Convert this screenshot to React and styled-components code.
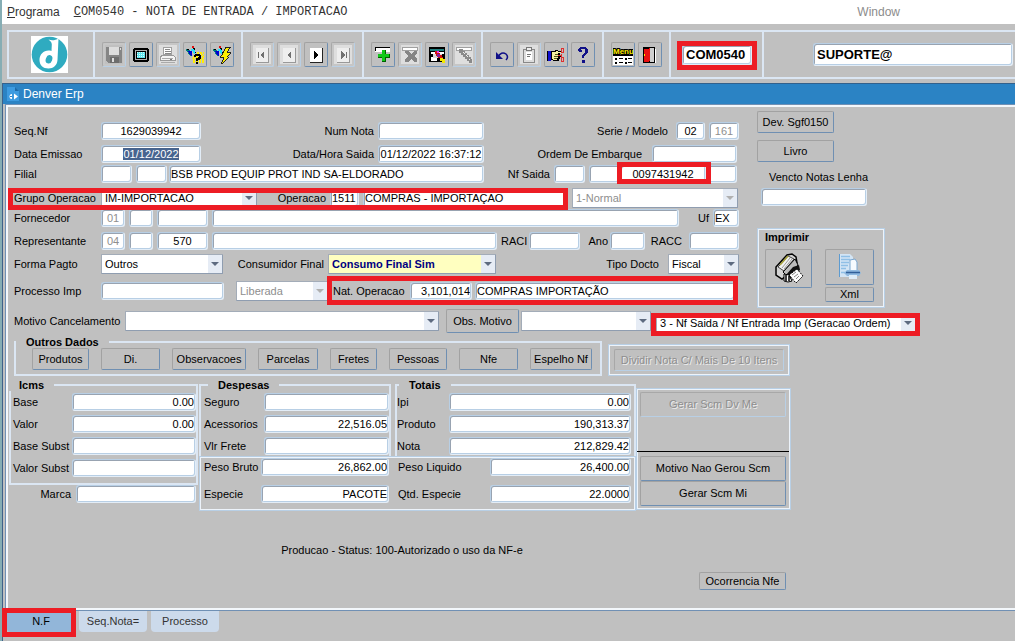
import React, { useEffect, useId, useRef } from "react";
import styled, { createGlobalStyle, css } from "styled-components";

const GlobalStyle = createGlobalStyle`
  *, *::before, *::after { box-sizing: border-box; }
  html, body { margin: 0; padding: 0; }
  body, button, input, select {
    font-family: "Liberation Sans", Arial, sans-serif;
    font-size: 11px;
    line-height: 13px;
    color: #000;
  }
  body { background: #c0c0c0; }
  ::selection { background: #47648f; color: #fff; }
`;

/* ---------- window chrome ---------- */

const Shell = styled.div`
  display: flex;
  flex-direction: column;
  min-height: 100vh;
  border-left: 2px solid #86adb4;
  background: #c0c0c0;
  overflow: hidden;
`;

const MenuBar = styled.header`
  display: flex;
  align-items: center;
  height: 24px;
  padding-left: 5px;
  background: #fff;
  font-size: 12px;
  color: #333;
`;

const MenuItem = styled.a`
  color: ${(p) => (p.$dim ? "#8c8c8c" : "#333")};
  text-decoration: none;
  margin-left: ${(p) => (p.$dim ? "auto" : "0")};
  margin-right: ${(p) => (p.$dim ? "115px" : "14px")};
  white-space: nowrap;
`;

const MenuTitle = styled.a`
  font-family: "Liberation Mono", "Courier New", monospace;
  color: #333;
  text-decoration: none;
  white-space: pre;
`;

const ToolBar = styled.div`
  display: flex;
  height: 49px;
  margin: 6px 0 4px 5px;
  border: 2px solid #dbe6f3;
  border-right: 0;
`;

const ToolGroup = styled.div`
  display: flex;
  flex: ${(p) => (p.$grow ? "1 1 auto" : "none")};
  align-items: center;
  gap: 3px;
  padding: 0 ${(p) => p.$end || 7}px 0 ${(p) => p.$start || 7}px;
  border-right: ${(p) => (p.$grow ? "0" : "2px solid #dbe6f3")};
`;

const ToolButton = styled.button`
  display: grid;
  place-items: center;
  width: 24px;
  height: 25px;
  padding: 0;
  border: 1px solid;
  border-color: #a2a2a2 #6f8fb2 #6f8fb2 #a2a2a2;
  border-radius: 2px;
  background: #c0c0c0;
  ${(p) =>
    p.$off &&
    css`
      border-color: #a8a8a8 #b8cfe5 #b8cfe5 #a8a8a8;
      background: ${p.$flat ? "#c0c0c0" : "#dedede"};
      box-shadow: inset 0 0 0 2px #c6c6c6;
    `}
`;

const Window = styled.main`
  display: flex;
  flex-direction: column;
  flex: 1;
  border-left: 1px solid #3f6189;
`;

const TitleBar = styled.h1`
  display: flex;
  align-items: center;
  gap: 4px;
  height: 21px;
  margin: 0;
  padding-left: 4px;
  border-top: 1px solid #33618c;
  background: #2b83c4;
  color: #fff;
  font-size: 12px;
  font-weight: 400;
`;

const Panel = styled.form`
  flex: 1;
  margin-left: 2px;
  padding-top: 4px;
  border: 1px solid #7090b4;
  border-right: 0;
  box-shadow: inset 2px 2px #f3f7fb, inset 0 -2px #f3f7fb;
`;

/* ---------- form parts ---------- */

const Top = styled.div`
  display: flex;
  align-items: flex-start;
  gap: 18px;
  padding: 2px 0 0 8px;
`;

const Rows = styled.div`
  display: flex;
  flex-direction: column;
  gap: ${(p) => p.$gap || 0}px;
  padding-top: ${(p) => p.$top || 0}px;
`;

const Row = styled.div`
  display: flex;
  align-items: center;
  height: ${(p) => p.$h || 18}px;
  margin-top: ${(p) => p.$mt || 0}px;
  padding-left: ${(p) => p.$pl || 0}px;
`;

const Label = styled.label`
  flex: none;
  width: ${(p) => (p.$w ? `${p.$w}px` : "auto")};
  padding-right: ${(p) => p.$pr || 0}px;
  padding-left: ${(p) => p.$pl || 0}px;
  text-align: ${(p) => (p.$pr ? "right" : "left")};
  white-space: nowrap;
`;

const TextBox = styled.input`
  flex: none;
  width: ${(p) => p.$w}px;
  height: 18px;
  margin-left: ${(p) => p.$ml || 0}px;
  padding: 0 1px;
  border: 1px solid;
  border-color: #b8cfe5 #e3edf7 #e3edf7 #b8cfe5;
  border-radius: 3px;
  outline: 0;
  background: #fff;
  box-shadow: inset 1px 1px #98a3b1, inset -1px -1px #b8cfe5;
  text-align: ${(p) => p.$align || "left"};
  &:disabled { color: #8e8e8e; }
`;

const ProgramBox = styled(TextBox)`
  height: ${(p) => p.$h}px;
  font-size: 13px;
  font-weight: 700;
  padding-left: 3px;
`;

const UserBox = styled(ProgramBox)`
  flex: 1 1 auto;
  width: auto;
  min-width: 60px;
`;

const Combo = styled.span`
  position: relative;
  flex: none;
  width: ${(p) => p.$w}px;
  height: 20px;
  margin-left: ${(p) => p.$ml || 0}px;
  &::after {
    content: "";
    position: absolute;
    top: 8px;
    right: 4px;
    border: 4px solid transparent;
    border-top-color: ${(p) => (p.$off ? "#b0b0b0" : "#5e6b80")};
    border-bottom: 0;
    pointer-events: none;
  }
  select {
    display: block;
    appearance: none;
    width: 100%;
    height: 100%;
    padding: 0 16px 0 3px;
    border: 1px solid;
    border-color: #a3acb8 #8f9db0 #8f9db0 #a3acb8;
    border-radius: 1px;
    outline: 0;
    background: linear-gradient(to left, #e6ecf5 14px, ${(p) => (p.$tint ? "#ffffc0" : "#fff")} 14px);
    color: ${(p) => (p.$off ? "#8e8e8e" : p.$tint ? "#000080" : "#000")};
    font-weight: ${(p) => (p.$tint ? 700 : 400)};
    opacity: 1;
  }
`;

const Button = styled.button`
  display: grid;
  place-items: center;
  flex: none;
  width: ${(p) => p.$w}px;
  height: ${(p) => p.$h || 22}px;
  margin-left: ${(p) => p.$ml || 0}px;
  padding: 0;
  border: 1px solid;
  border-color: #a2a2a2 #6f8fb2 #6f8fb2 #a2a2a2;
  border-radius: 2px;
  background: #c0c0c0;
  white-space: nowrap;
  &:disabled {
    border-color: #a8a8a8 #b8cfe5 #b8cfe5 #a8a8a8;
    color: #8e8e8e;
    text-shadow: 1px 1px #ececec;
  }
`;

const Marked = styled.div`
  position: relative;
  display: flex;
  flex: none;
  align-items: center;
  align-self: ${(p) => p.$self || "auto"};
  margin-left: ${(p) => p.$ml || 0}px;
  &::after {
    content: "";
    position: absolute;
    z-index: 2;
    inset: ${(p) => p.$inset};
    border: 5px solid #ed1c24;
    pointer-events: none;
  }
`;

const Group = styled.fieldset`
  min-width: 0;
  margin: 0;
  padding: ${(p) => p.$pad || "0"};
  border: 2px solid #dbe6f3;
  border-bottom-width: ${(p) => (p.$open ? 0 : 2)}px;
  > legend {
    height: 12px;
    margin-left: ${(p) => p.$lead || 0}px;
    padding: 0 10px;
    line-height: 12px;
    font-weight: 700;
  }
`;

const Frame = styled.div`
  border: 1px solid #b8cfe5;
  box-shadow: inset 0 0 0 1px #edf3fa;
  padding: ${(p) => p.$pad};
`;

const ButtonRow = styled.div`
  display: flex;
  gap: 12px;
`;

const Groups = styled.div`
  display: flex;
  align-items: flex-end;
  gap: 6px;
  margin-top: 3px;
  padding-left: 8px;
`;

const Lower = styled.div`
  width: fit-content;
  margin-top: 3px;
  padding-left: 3px;
`;

const Totals = styled.div`
  display: flex;
  align-items: flex-start;
`;

const MiddleTop = styled.div`
  display: flex;
  gap: 4px;
`;

const Middle = styled.div`
  margin-left: 1px;
`;

const ScmFrame = styled(Frame)`
  margin-top: 9px;
`;

const Rule = styled.hr`
  height: 1px;
  margin: 34px -3px 4px -3px;
  border: 0;
  background: #000;
`;

const Status = styled.output`
  display: block;
  margin-top: 33px;
  padding-left: 4px;
  text-align: center;
`;

const Actions = styled.div`
  display: flex;
  justify-content: flex-end;
  margin-top: 15px;
  padding: 0 5px 19px 0;
`;

const Side = styled.aside`
  display: flex;
  flex-direction: column;
  align-items: flex-start;
`;

const SideButtons = styled.div`
  display: flex;
  flex-direction: column;
  gap: 7px;
`;

const SideField = styled.div`
  display: flex;
  flex-direction: column;
  gap: 4px;
  margin: 9px 0 22px 4px;
`;

const PrintFrame = styled(Frame)`
  width: 128px;
  height: 80px;
  h2 {
    margin: 0 0 5px;
    font-size: 11px;
    line-height: 13px;
  }
`;

const PrintButtons = styled.div`
  display: flex;
  gap: 13px;
`;

const Stack = styled.div`
  display: flex;
  flex-direction: column;
  gap: 2px;
`;

const Tabs = styled.nav`
  display: flex;
  gap: 4px;
  height: 30px;
  padding-left: 4px;
`;

const Tab = styled.button`
  width: 68px;
  height: 21px;
  padding: 0;
  border: 0;
  border-radius: 0 0 4px 4px;
  background: ${(p) => (p.$on ? "#92b6d9" : "#ccdaeb")};
  color: ${(p) => (p.$on ? "#000" : "#333")};
`;

/* ---------- drawings ---------- */

const Px = ({ s = 18, children }) => (
  <svg width={s} height={s} viewBox={`0 0 ${s} ${s}`} shapeRendering="crispEdges" aria-hidden="true">
    {children}
  </svg>
);

const Logo = () => (
  <svg width="37" height="37" viewBox="0 0 37 37" aria-hidden="true">
    <path d="M0 0h37v37H0z" fill="#fff" />
    <circle cx="18.500" cy="18.500" r="17.800" fill="#2fabc0" />
    <path d="M17.500 3.500C21 5 24.500 4.200 27.500 2.500L26.500 24C26 29.500 22.500 32.500 17.500 32.500C12 32.500 8.500 29 8.500 24C8.500 18.500 12.500 14.500 17.500 14.500C18.500 14.500 19.500 14.600 20.500 15L20.800 8.500C20.800 6.500 19.500 5 17.500 3.500Z" fill="#fff" />
    <ellipse cx="18" cy="23.300" rx="3.200" ry="4.300" fill="#2fabc0" transform="rotate(20 18 23.300)" />
  </svg>
);

const FileIcon = () => (
  <svg width="12" height="14" viewBox="0 0 12 14" aria-hidden="true">
    <path d="M0 0h8l4 4v10H0z" fill="#3d9be0" />
    <path d="M8 0v4h4z" fill="#1f6ba8" />
    <path d="M5 7a2.500 2.500 0 1 0 0 5z" fill="#fff" />
    <path d="M3 9h2v1H3z" fill="#2b83c4" />
    <path d="M7 6.500v6L11 9.500z" fill="#fff" />
  </svg>
);

const SaveIcon = () => (
  <Px>
    <path d="M1 1h15l1 1v15H3l-2-2z" fill="#858585" />
    <path d="M4 1h10v8H4z" fill="#ddd" />
    <path d="M5 11h9v6H5z" fill="#6d6d6d" />
    <path d="M7 12h2v4H7z" fill="#ddd" />
    <path d="M15 2h1v2h-1z" fill="#ddd" />
  </Px>
);

const ScreenIcon = () => (
  <Px>
    <path d="M2 2h14v1h1v12h-1v1H2v-1H1V3h1z" />
    <path d="M3 4h12v10H3z" fill="#b0b0b0" />
    <path d="M4 5h10v8H4z" />
    <path d="M5 6h8v6H5z" fill="#5fe5ef" />
    <path d="M5 6.500h8M5 8.500h8M5 10.500h8" stroke="#d8ffff" strokeDasharray="1 1" />
  </Px>
);

const PrinterOffIcon = () => (
  <Px>
    <path d="M4.500 1.500h8v7h-8z" fill="#fff" stroke="#a0a0a0" />
    <path d="M6 3.500h5M6 5.500h6M6 7.500h6" stroke="#888" />
    <path d="M2.500 9.500h12l2 2v3h-15v-3z" fill="#f4f4f4" stroke="#999" />
    <path d="M3 12.500h11M2 16.500h14" stroke="#aaa" />
    <path d="M11 13h2v1h-2z" fill="#777" />
  </Px>
);

const Torch = () => (
  <>
    <path d="M0 3h2v1h2v1h2v4H5v1H4V9H3V8H2V6H1V5H0z" fill="#008080" />
    <path d="M2 5h4v5H5V9H4V8H3V6H2z" fill="#0000d0" />
    <path d="M5 3h3v1h1v4H8V7H7V5H5z" fill="#20e0ff" />
    <path d="M6 0h2v2H6z" fill="#e01010" />
    <path d="M8 2h1v2H8zM1 3h2v1H1zM9 6h1v1H9zM7 2h1v1H7z" />
  </>
);

const QueryIcon = () => (
  <Px>
    <path
      d="M11 6.500h7M9 8.500h9M7 10.500h11M6 12.500h12M7 14.500h11M7 16.500h11M11 7.500h7M8 9.500h10M7 11.500h11M7 13.500h11M7 15.500h11"
      stroke="#ffee00"
      strokeDasharray="2 1"
    />
    <Torch />
    <path d="M9 8h5v1h1v4h-1v1h-2v1h-2v-3h2v-1h1V10h-3v1H8V9h1zM10 16h2v2h-2z" />
  </Px>
);

const FlashIcon = () => (
  <Px>
    <Torch />
    <path d="M12 1h6v1h-1v1h-1v2h-1v1h3v2h-1v1h-1v1h-1v1h1v1h-1v1h-1v1h-1v1h-1v1h-1v1h-1v1H8v-2h1v-2h1v-2H7v-2h1V9h1V7h1V5h1V3h1z" fill="#222" />
    <path d="M13 2h3v1h-1v2h-1v2h3v1h-1v1h-1v1h-1v1h1v1h-1v1h-1v1h-1v1h-1v1h-1v1H9v-1h1v-2h1v-3H8v-1h1V9h1V7h1V5h1V3h1z" fill="#ffee00" />
  </Px>
);

const NavIcon = ({ kind, off }) => {
  const c = off ? "#707070" : "#000";
  const left = kind === "first" || kind === "prev";
  return (
    <Px>
      <path d="M3 2h12v14H3z" fill={off ? "#eee" : "#fff"} />
      <path d="M15.500 2v14.500H3" fill="none" stroke={off ? "#999" : "#222"} />
      <path d={left ? "M11 5v8L7 9z" : "M7 5v8l4-4z"} fill={c} />
      {kind === "first" && <path d="M5 6h1v6H5z" fill={c} />}
      {kind === "last" && <path d="M12 6h1v6h-1z" fill={c} />}
    </Px>
  );
};

const AddIcon = () => (
  <Px>
    <path d="M1 2h15v4H1z" fill="#fff" />
    <path d="M1 1h15v1H1zM1 2h1v3H1z" />
    <path d="M8 4h4v4h4v4h-4v4H8v-4H4V8h4z" fill="#006000" />
    <path d="M8 4h3v4h4v3h-4v4H8v-4H4V8h4z" fill="#10c818" />
  </Px>
);

const DeleteIcon = () => (
  <Px>
    <path d="M1.500 1.500h15v3h-15z" fill="#fff" stroke="#a0a0a0" />
    <path d="M4 5h3l3 3 3-3h3v2l-3 3 3 3v3h-3l-3-3-3 3H4v-3l3-3-3-3z" fill="#858585" />
  </Px>
);

const EditIcon = () => (
  <Px>
    <path d="M1 1h16v15H1z" />
    <path d="M2 3h14v2H2z" fill="#208080" />
    <path d="M3 6h13v2H3zM3 11h6v4H3z" fill="#fff" />
    <path d="M5 8h9v4H5z" fill="#d8d8d8" />
    <path d="M7 5h4v2h1v2h2v2h1v3h-3v-2h-2v-2H8V8H7z" fill="#d01010" />
    <path d="M9 5h2v2H9z" fill="#f030f0" />
    <path d="M9 8h3v3H9z" fill="#8020a0" />
    <path d="M12 12h3v1h2v4h-3v-2h-2z" fill="#f2e800" />
  </Px>
);

const WandIcon = () => (
  <Px>
    <path d="M1.500 1.500h15v3h-15z" fill="#fff" stroke="#a0a0a0" />
    <path d="M4 3h4v2h2v2h2v2h2v2h2v2h1v4h-3v-2h-2v-2h-2v-2H8V9H6V7H4z" fill="#8a8a8a" />
    <path d="M8 6h1v1H8zM9 7h1v1H9zM11 9h1v1h-1zM12 10h1v1h-1zM14 13h1v1h-1z" fill="#f0f0f0" />
  </Px>
);

const UndoIcon = () => (
  <svg width="18" height="18" viewBox="0 0 18 18" aria-hidden="true">
    <path d="M5 11C7 7 10 6 13 8c2 2 2 4 0 6" fill="none" stroke="#101088" strokeWidth="1.500" />
    <path d="M3 6v7h7z" fill="#101088" />
  </svg>
);

const ClipIcon = () => (
  <Px>
    <path d="M3.500 3.500h11v13h-11z" fill="#ddd" stroke="#888" />
    <path d="M6.500 1.500h5v3h-5z" fill="#eee" stroke="#777" />
    <path d="M6 6h6v8H6z" fill="#fff" />
    <path d="M7 8.500h4M7 10.500h3" stroke="#777" />
  </Px>
);

const HandIcon = () => (
  <Px>
    <path d="M4 5h4V4h3v1h4v2h-2v2h1v2h-1v2h-1v2H6v-1H4z" fill="#000" />
    <path d="M5 6h4V5h2v1h3v1h-3v2h1v1h-1v2h-1v2H6v-1H5z" fill="#f5f0a0" />
    <path d="M8 8.500h3M7 10.500h4M7 12.500h3" stroke="#55551a" />
    <path d="M1 5h3v10H1z" fill="#1010d0" />
    <path d="M0 5h1v10H0z" />
    <path d="M14.500 2.500h2v4h-2zM14.500 11.500h2v4h-2zM11 9.500h3v-2M14.500 9v2" fill="none" stroke="#e03030" />
  </Px>
);

const HelpIcon = () => (
  <Px>
    <path
      d="M6 1h6v1h1v1h1v4h-1v1h-1v1h-1v1h-1v2H8V9h1V8h1V7h1V3H7v1h1v2H5V5H4V3h1V2h1zM8 14h3v3H8z"
      fill="#101088"
    />
  </Px>
);

const MenuIcon = () => (
  <Px s={20}>
    <text
      x="0"
      y="9"
      fontFamily="Liberation Sans, Arial, sans-serif"
      fontSize="8"
      fontWeight="700"
      fill="#ffee00"
      stroke="#000"
      strokeWidth="2"
      paintOrder="stroke"
    >
      Menu
    </text>
    <path d="M0 10h20v10H0z" fill="#fff" />
    <path d="M0 10h20v1H0z" />
    <path d="M2 13h2v2H2zM6 13h4v1H6zM12 13h2v2h-2zM15 13h4v1h-4zM2 17h2v2H2zM6 17h4v1H6zM12 17h2v2h-2zM15 17h4v1h-4z" />
  </Px>
);

const DoorIcon = () => (
  <Px>
    <path d="M2 1h12v16H2z" />
    <path d="M9 2h4v14H9z" fill="#d0d0d0" />
    <path d="M3 3h4l2-1v13l-2 1H3z" fill="#e81010" />
    <path d="M3 8h1v2H3z" fill="#ffee00" />
    <path d="M14 3h1v14h-1z" fill="#fff" />
  </Px>
);

const PrinterIcon = () => (
  <svg width="30" height="32" viewBox="0 0 30 32" aria-hidden="true">
    <path d="M2 14L13 2l5-1 4 3 1 6-11 13-4 3-6-4z" fill="#d4d4d4" stroke="#000" strokeWidth="1.500" />
    <path d="M4 14L14 3l6 3-10 12z" fill="#f2f2f2" stroke="#444" />
    <path d="M8 15l8-10M10 16l8-10" stroke="#999" />
    <path d="M6 12l8-9" stroke="#a7a23a" strokeWidth="1.500" />
    <path d="M9 19L21 6l3 6-10 12z" fill="#bbb" stroke="#000" />
    <path d="M11 23l8-9 6-2 1 5-10 9z" fill="#111" />
    <path d="M15 22l8-6 6 7-7 7z" fill="#fff" stroke="#000" strokeDasharray="2 1" />
    <path d="M18 22l4-3M20 24l4-3M22 26l3-3" stroke="#888" />
    <path d="M10 21l5 1 3 6-4 1-4-1z" fill="#fff" stroke="#000" />
    <path d="M12 22v6M15 23v5" stroke="#000" strokeWidth="1.500" />
  </svg>
);

const DocPrintIcon = () => (
  <svg width="24" height="28" viewBox="0 0 24 28" aria-hidden="true">
    <path d="M1 1h11l3 3v20H1z" fill="#d3e5f5" />
    <path d="M1.500 1v23" stroke="#5d9bd0" />
    <path d="M3 3.500h9M3 6.500h9M3 9.500h8M3 12.500h7M3 15.500h5M3 19.500h4" stroke="#8fbfe6" strokeWidth="1.500" />
    <path d="M12 7l5-1 2 3v9h-7z" fill="#f5fafe" stroke="#7ba7d0" />
    <path d="M9 17h12l2 3-2 3H9l-3-3z" fill="#8fb9e0" />
    <path d="M8 19.500h14" stroke="#315f99" strokeWidth="1.500" />
    <path d="M11 22h8v4h-8z" fill="#deedf9" />
  </svg>
);

/* ---------- composed fields ---------- */

function Field({ label, lw, lpr, lpl, ...box }) {
  const id = useId();
  return (
    <>
      <Label htmlFor={id} $w={lw} $pr={lpr} $pl={lpl}>{label}</Label>
      <TextBox id={id} {...box} />
    </>
  );
}

function Select({ label, lw, lpr, text = "", name, ml, w, off, tint }) {
  const id = useId();
  return (
    <>
      {label && <Label htmlFor={id} $w={lw} $pr={lpr}>{label}</Label>}
      <Combo $w={w} $ml={ml} $off={off} $tint={tint}>
        <select id={id} disabled={off} aria-label={label ? undefined : name}>
          <option>{text}</option>
        </select>
      </Combo>
    </>
  );
}

function Tool({ name, off, flat, children }) {
  return (
    <ToolButton type="button" aria-label={name} title={name} disabled={off} $off={off} $flat={flat}>
      {children}
    </ToolButton>
  );
}

const dataButtons = [
  ["Produtos", 57],
  ["Di.", 59],
  ["Observacoes", 74],
  ["Parcelas", 60],
  ["Fretes", 47],
  ["Pessoas", 58],
  ["Nfe", 59],
  ["Espelho Nf", 62],
];

export default function App() {
  const issueDate = useRef(null);
  useEffect(() => {
    issueDate.current.focus();
    issueDate.current.select();
  }, []);

  return (
    <Shell>
      <GlobalStyle />
      <MenuBar>
        <MenuItem href="#programa"><u>P</u>rograma</MenuItem>
        <MenuTitle href="#com0540"><u>C</u>OM0540 - NOTA DE ENTRADA / IMPORTACAO</MenuTitle>
        <MenuItem href="#window" $dim>Window</MenuItem>
      </MenuBar>

      <ToolBar>
        <ToolGroup $start={22} $end={25}><Logo /></ToolGroup>
        <ToolGroup>
          <Tool name="Salvar" off flat><SaveIcon /></Tool>
          <Tool name="Tela"><ScreenIcon /></Tool>
          <Tool name="Imprimir tela" off><PrinterOffIcon /></Tool>
          <Tool name="Consultar"><QueryIcon /></Tool>
          <Tool name="Executar"><FlashIcon /></Tool>
        </ToolGroup>
        <ToolGroup>
          <Tool name="Primeiro" off><NavIcon kind="first" off /></Tool>
          <Tool name="Anterior" off><NavIcon kind="prev" off /></Tool>
          <Tool name="Proximo"><NavIcon kind="next" /></Tool>
          <Tool name="Ultimo" off><NavIcon kind="last" off /></Tool>
        </ToolGroup>
        <ToolGroup $end={5}>
          <Tool name="Inserir"><AddIcon /></Tool>
          <Tool name="Excluir" off><DeleteIcon /></Tool>
          <Tool name="Editar"><EditIcon /></Tool>
          <Tool name="Limpar" off><WandIcon /></Tool>
        </ToolGroup>
        <ToolGroup>
          <Tool name="Desfazer"><UndoIcon /></Tool>
          <Tool name="Colar" off><ClipIcon /></Tool>
          <Tool name="Recortar"><HandIcon /></Tool>
          <Tool name="Ajuda"><HelpIcon /></Tool>
        </ToolGroup>
        <ToolGroup>
          <Tool name="Menu"><MenuIcon /></Tool>
          <Tool name="Sair"><DoorIcon /></Tool>
        </ToolGroup>
        <ToolGroup $start={11} $end={10}>
          <Marked $inset="-4px -5px -5px -5px">
            <ProgramBox $w={70} $h={20} aria-label="Codigo do programa" defaultValue="COM0540" />
          </Marked>
        </ToolGroup>
        <ToolGroup $grow $start={49} $end={2}>
          <UserBox $h={23} aria-label="Usuario" defaultValue="SUPORTE@" />
        </ToolGroup>
      </ToolBar>

      <Window>
        <TitleBar><FileIcon />Denver Erp</TitleBar>
        <Panel onSubmit={(e) => e.preventDefault()}>
          <Top>
            <Rows $top={11}>
              <Row>
                <Field label="Seq.Nf" lw={87} $w={100} $align="center" defaultValue="1629039942" />
                <Field label="Num Nota" lw={177} lpr={4} $w={106} />
                <Field label="Serie / Modelo" lw={192} lpr={8} $w={29} $align="center" defaultValue="02" />
                <TextBox $w={30} $ml={4} $align="center" disabled aria-label="Modelo" defaultValue="161" />
              </Row>
              <Row $mt={5}>
                <Field label="Data Emissao" lw={87} $w={100} $align="center" defaultValue="01/12/2022" ref={issueDate} />
                <Field label="Data/Hora Saida" lw={177} lpr={4} $w={106} $align="center" defaultValue="01/12/2022 16:37:12" />
                <Field label="Ordem De Embarque" lw={168} lpr={10} $w={85} />
              </Row>
              <Row $mt={2}>
                <Field label="Filial" lw={87} $w={31} />
                <TextBox $w={31} $ml={4} aria-label="Filial complemento" />
                <TextBox $w={315} $ml={2} aria-label="Nome da filial" defaultValue="BSB PROD EQUIP PROT IND SA-ELDORADO" />
                <Field label="Nf Saida" lw={70} lpr={4} $w={31} />
                <TextBox $w={31} $ml={4} aria-label="Serie saida" />
                <Marked $inset="-3px -5px -1px -3px">
                  <TextBox $w={86} $align="center" aria-label="Numero saida" defaultValue="0097431942" />
                </Marked>
                <TextBox $w={31} aria-label="Digito saida" />
              </Row>
              <Row $h={20} $mt={5}>
                <Marked $inset="0 0 -2px -6px">
                  <Select label="Grupo Operacao" lw={87} w={156} text="IM-IMPORTACAO" />
                  <Field label="Operacao" lw={73} lpr={4} $w={29} defaultValue="1511" />
                  <TextBox $w={205} $ml={4} aria-label="Descricao da operacao" defaultValue="COMPRAS - IMPORTAÇAO" />
                </Marked>
                <Select ml={4} w={166} off name="Tipo de nota" text="1-Normal" />
              </Row>
              <Row $mt={1}>
                <Field label="Fornecedor" lw={87} $w={24} $align="center" disabled defaultValue="01" />
                <TextBox $w={24} $ml={4} aria-label="Fornecedor loja" />
                <TextBox $w={51} $ml={4} aria-label="Fornecedor codigo" />
                <TextBox $w={467} $ml={4} aria-label="Fornecedor nome" />
                <Field label="Uf" lw={34} lpr={4} $w={26} defaultValue="EX" />
              </Row>
              <Row $mt={5}>
                <Field label="Representante" lw={87} $w={24} $align="center" disabled defaultValue="04" />
                <TextBox $w={24} $ml={4} aria-label="Representante loja" />
                <TextBox $w={51} $ml={4} $align="center" aria-label="Representante codigo" defaultValue="570" />
                <TextBox $w={285} $ml={4} aria-label="Representante nome" />
                <Field label="RACI" lw={32} lpl={4} $w={51} />
                <Field label="Ano" lw={30} lpr={2} $w={35} />
                <Field label="RACC" lw={44} lpr={7} $w={50} />
              </Row>
              <Row $h={20} $mt={4}>
                <Select label="Forma Pagto" lw={87} w={122} text="Outros" />
                <Select label="Consumidor Final" lw={105} lpr={4} w={168} tint text="Consumo Final Sim" />
                <Select label="Tipo Docto" lw={172} lpr={9} w={71} text="Fiscal" />
              </Row>
              <Row $mt={8}>
                <Field label="Processo Imp" lw={87} $w={123} />
                <Select ml={12} w={92} off name="Situacao do processo" text="Liberada" />
                <Marked $inset="-6px -3px -5px -1px">
                  <Field label="Nat. Operacao" lw={82} lpl={5} $w={62} $align="right" defaultValue="3,101,014" />
                  <TextBox $w={260} $ml={3} aria-label="Descricao da natureza" defaultValue="COMPRAS IMPORTAÇÃO" />
                </Marked>
              </Row>
            </Rows>

            <Side>
              <SideButtons>
                <Button type="button" $w={77}>Dev. Sgf0150</Button>
                <Button type="button" $w={77}>Livro</Button>
              </SideButtons>
              <SideField>
                <Label htmlFor="vencto" $pl={8}>Vencto Notas Lenha</Label>
                <TextBox id="vencto" $w={106} />
              </SideField>
              <PrintFrame $pad="2px 7px">
                <h2>Imprimir</h2>
                <PrintButtons>
                  <Button type="button" $w={47} $h={39} aria-label="Imprimir nota"><PrinterIcon /></Button>
                  <Stack>
                    <Button type="button" $w={49} $h={36} aria-label="Visualizar nota"><DocPrintIcon /></Button>
                    <Button type="button" $w={49} $h={15}>Xml</Button>
                  </Stack>
                </PrintButtons>
              </PrintFrame>
            </Side>
          </Top>

          <Row $h={24} $mt={1} $pl={8}>
            <Select label="Motivo Cancelamento" lw={111} w={314} />
            <Button type="button" $w={73} $h={24} $ml={7}>Obs. Motivo</Button>
            <Select ml={2} w={130} name="Observacao do motivo" />
            <Marked $self="flex-end" $ml={5} $inset="0 -4px -3px -5px">
              <Select w={260} name="Tipo de documento" text="3 - Nf Saida / Nf Entrada Imp (Geracao Ordem)" />
            </Marked>
          </Row>

          <Groups>
            <Group $pad="0 8px 4px 16px" $lead={-16}>
              <legend>Outros Dados</legend>
              <ButtonRow>
                {dataButtons.map(([text, w]) => (
                  <Button type="button" key={text} $w={w}>{text}</Button>
                ))}
              </ButtonRow>
            </Group>
            <Frame $pad="4px 5px">
              <Button type="button" disabled $w={170}>Dividir Nota C/ Mais De 10 Itens</Button>
            </Frame>
          </Groups>

          <Lower>
            <Totals>
              <div>
                <Group $pad="2px 0 6px 2px" $lead={-4}>
                  <legend>Icms</legend>
                  <Rows $gap={4}>
                    <Row><Field label="Base" lw={59} $w={124} $align="right" defaultValue="0.00" /></Row>
                    <Row><Field label="Valor" lw={59} $w={124} $align="right" defaultValue="0.00" /></Row>
                    <Row><Field label="Base Subst" lw={59} $w={124} $align="right" /></Row>
                    <Row><Field label="Valor Subst" lw={59} $w={124} $align="right" /></Row>
                  </Rows>
                </Group>
                <Row><Field label="Marca" lw={67} lpr={5} $w={120} /></Row>
              </div>

              <Middle>
                <MiddleTop>
                  <Group $open $pad="2px 0 1px 3px" $lead={4}>
                    <legend>Despesas</legend>
                    <Rows $gap={4}>
                      <Row><Field label="Seguro" lw={60} $w={125} $align="right" /></Row>
                      <Row><Field label="Acessorios" lw={60} $w={125} $align="right" defaultValue="22,516.05" /></Row>
                      <Row><Field label="Vlr Frete" lw={60} $w={125} $align="right" /></Row>
                    </Rows>
                  </Group>
                  <Group $open $pad="2px 3px 1px 0" $lead={2}>
                    <legend>Totais</legend>
                    <Rows $gap={4}>
                      <Row><Field label="Ipi" lw={52} $w={182} $align="right" defaultValue="0.00" /></Row>
                      <Row><Field label="Produto" lw={52} $w={182} $align="right" defaultValue="190,313.37" /></Row>
                      <Row><Field label="Nota" lw={52} $w={182} $align="right" defaultValue="212,829.42" /></Row>
                    </Rows>
                  </Group>
                </MiddleTop>
                <Frame $pad="1px 4px 7px">
                  <Rows $gap={9}>
                    <Row>
                      <Field label="Peso Bruto" lw={57} $w={128} $align="right" defaultValue="26,862.00" />
                      <Field label="Peso Liquido" lw={101} lpl={9} $w={141} $align="right" defaultValue="26,400.00" />
                    </Row>
                    <Row>
                      <Field label="Especie" lw={57} $w={128} $align="right" defaultValue="PACOTE" />
                      <Field label="Qtd. Especie" lw={101} lpl={9} $w={141} $align="right" defaultValue="22.0000" />
                    </Row>
                  </Rows>
                </Frame>
              </Middle>

              <ScmFrame $pad="3px 4px 3px 3px">
                <Button type="button" disabled $w={146} $h={25}>Gerar Scm Dv Me</Button>
                <Rule />
                <Button type="button" $w={146} $h={25}>Motivo Nao Gerou Scm</Button>
                <Button type="button" $w={146} $h={25}>Gerar Scm Mi</Button>
              </ScmFrame>
            </Totals>

            <Status>Producao - Status: 100-Autorizado o uso da NF-e</Status>
            <Actions>
              <Button type="button" $w={87} $h={18}>Ocorrencia Nfe</Button>
            </Actions>
          </Lower>
        </Panel>

        <Tabs>
          <Marked $self="flex-start" $inset="-3px -1px -5px -5px">
            <Tab type="button" $on>N.F</Tab>
          </Marked>
          <Tab type="button">Seq.Nota=</Tab>
          <Tab type="button">Processo</Tab>
        </Tabs>
      </Window>
    </Shell>
  );
}
